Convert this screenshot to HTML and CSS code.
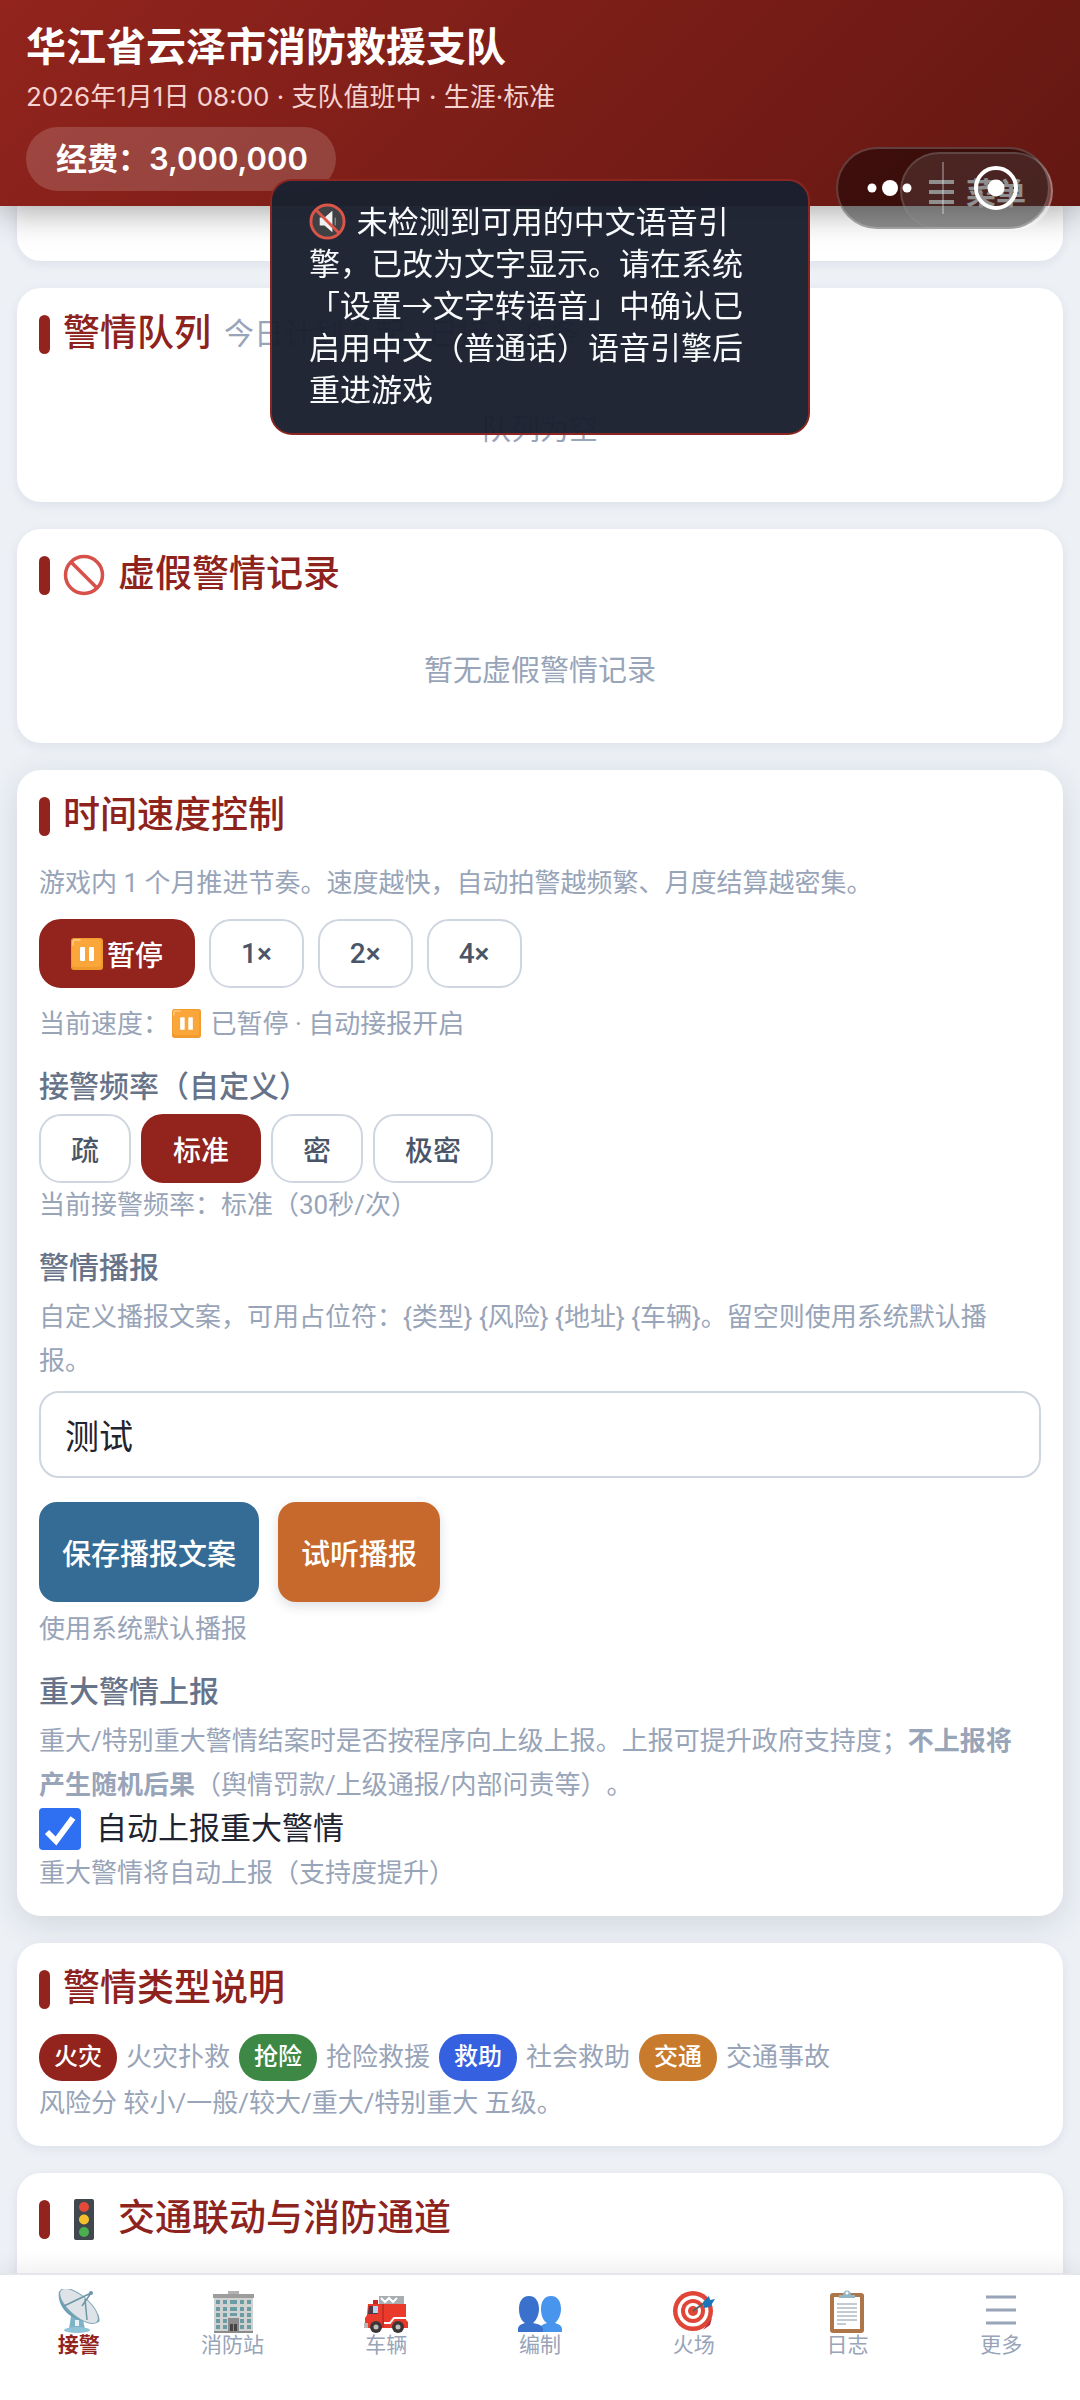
FILE: index.html
```html
<!DOCTYPE html>
<html lang="zh-CN">
<head>
  <meta charset="UTF-8">
  <meta name="viewport" content="width=device-width, initial-scale=1.0">
  <title>消防救援支队</title>
  <link rel="stylesheet" href="styles.css">
</head>
<body>
  <!-- shared icons -->
  <svg class="sprite" aria-hidden="true">
    <symbol id="icon-pause" viewBox="0 0 32 32">
      <rect x="0" y="0" width="32" height="32" rx="3" fill="#f19a2e"/>
      <rect x="1" y="1" width="29" height="28" rx="3" fill="#fba63a"/>
      <path d="M2 7V4q0-2 2-2h5" fill="none" stroke="#ffd08c" stroke-width="1.5" stroke-linecap="round"/>
      <rect x="9" y="9" width="5" height="14" rx="1" fill="#fff"/>
      <rect x="18" y="9" width="5" height="14" rx="1" fill="#fff"/>
    </symbol>
  </svg>

  <header class="header">
    <h1>华江省云泽市消防救援支队</h1>
    <p class="subtitle">2026年1月1日 08:00 · 支队值班中 · 生涯·标准</p>
    <div class="funds">经费：3,000,000</div>
    <button class="menu-btn" type="button">
      <svg viewBox="0 0 26 26" width="26" height="26"><path d="M0 4h25M0 14h25M0 24h25" stroke="currentColor" stroke-width="4"/></svg>
      菜单
    </button>
    <div class="capsule">
      <button class="capsule-btn" type="button" aria-label="更多操作">
        <svg viewBox="0 0 46 18" width="46" height="18" fill="#fff"><circle cx="5" cy="9" r="4.5"/><circle cx="23" cy="9" r="8"/><circle cx="40" cy="9" r="4.5"/></svg>
      </button>
      <button class="capsule-btn capsule-close" type="button" aria-label="关闭">
        <svg viewBox="0 0 44 44" width="44" height="44"><circle cx="22" cy="22" r="20" fill="none" stroke="#fff" stroke-width="4"/><circle cx="22" cy="22" r="8.5" fill="#fff"/></svg>
      </button>
    </div>
  </header>

  <main class="main">
    <section class="card card-tail"></section>

    <section class="card">
      <h2>警情队列 <small>今日计划 2 起 · 已接入 0 条</small></h2>
      <p class="empty">队列为空</p>
    </section>

    <section class="card">
      <h2>
        <svg class="title-icon" viewBox="0 0 42 42"><g fill="none" stroke="#d8504a" stroke-width="3.5"><circle cx="21" cy="21" r="18.5"/><path d="M8 8l26 26"/></g></svg>
        虚假警情记录
      </h2>
      <p class="empty">暂无虚假警情记录</p>
    </section>

    <section class="card card-active">
      <h2>时间速度控制</h2>
      <p class="hint">游戏内 1 个月推进节奏。速度越快，自动拍警越频繁、月度结算越密集。</p>
      <div class="chips chips-speed">
        <button class="chip active" type="button"><svg class="chip-icon"><use href="#icon-pause"/></svg>暂停</button>
        <button class="chip" type="button">1×</button>
        <button class="chip" type="button">2×</button>
        <button class="chip" type="button">4×</button>
      </div>
      <p class="hint">当前速度：<svg class="inline-icon"><use href="#icon-pause"/></svg> 已暂停 · 自动接报开启</p>

      <h3>接警频率（自定义）</h3>
      <div class="chips">
        <button class="chip" type="button">疏</button>
        <button class="chip active" type="button">标准</button>
        <button class="chip" type="button">密</button>
        <button class="chip" type="button">极密</button>
      </div>
      <p class="hint">当前接警频率：标准（30秒/次）</p>

      <h3><label for="broadcast">警情播报</label></h3>
      <p class="hint">自定义播报文案，可用占位符：{类型} {风险} {地址} {车辆}。留空则使用系统默认播报。</p>
      <input class="text-input" id="broadcast" type="text" value="测试">
      <div class="actions">
        <button class="btn btn-blue" type="button">保存播报文案</button>
        <button class="btn btn-orange" type="button">试听播报</button>
      </div>
      <p class="hint">使用系统默认播报</p>

      <h3>重大警情上报</h3>
      <p class="hint">重大/特别重大警情结案时是否按程序向上级上报。上报可提升政府支持度；<strong>不上报将产生随机后果</strong>（舆情罚款/上级通报/内部问责等）。</p>
      <label class="check"><input type="checkbox" checked> 自动上报重大警情</label>
      <p class="hint">重大警情将自动上报（支持度提升）</p>
    </section>

    <section class="card">
      <h2>警情类型说明</h2>
      <div class="types">
        <span class="tag tag-fire">火灾</span><span>火灾扑救</span>
        <span class="tag tag-rescue">抢险</span><span>抢险救援</span>
        <span class="tag tag-help">救助</span><span>社会救助</span>
        <span class="tag tag-traffic">交通</span><span>交通事故</span>
      </div>
      <p class="hint">风险分 较小/一般/较大/重大/特别重大 五级。</p>
    </section>

    <section class="card">
      <h2>
        <svg class="title-icon" viewBox="0 0 42 42"><rect x="11" y="1" width="20" height="41" rx="2" fill="#40484d"/><circle cx="21" cy="9" r="5" fill="#e5493a"/><circle cx="21" cy="21.5" r="5" fill="#f6c02d"/><circle cx="21" cy="34" r="5" fill="#4bae4f"/></svg>
        交通联动与消防通道
      </h2>
      <p class="empty"></p>
    </section>
  </main>

  <nav class="tabbar">
    <a class="tab active" href="#alarm">
      <svg viewBox="0 0 44 44">
        <path d="M14 27h11l3 13H12z" fill="#7fb3c8"/><path d="M18 31h4v6h-4z" fill="#e6f2f6"/>
        <ellipse cx="20" cy="41" rx="13" ry="3" fill="#8fc3d5"/>
        <path d="M2 2C0 12 6 32 38 34c6 0 5-4 3-9z" fill="#6b9fb6"/>
        <ellipse cx="22" cy="17" rx="24" ry="10" transform="rotate(41 22 17)" fill="#dde3e6" stroke="#86a9b8"/>
        <path d="M7 17L34 4M25 17l9-13M30 31L28 10" fill="none" stroke="#6e96a8" stroke-width="1.5"/><circle cx="34" cy="4" r="2" fill="#6e96a8"/>
      </svg>
      <span>接警</span>
    </a>
    <a class="tab" href="#station">
      <svg viewBox="0 0 44 44">
        <path d="M17 2h11v4H17z" fill="#b3b3b3"/><path d="M2 5h41v4H2z" fill="#9d9d9d"/><path d="M3 9h39v34H3z" fill="#d0d2d2"/>
        <g fill="#6b9ba3"><path d="M5 11h4v4H5zM12 11h4v4h-4zM19 11h7v4h-7zM29 11h4v4h-4zM36 11h4v4h-4z"/><path d="M5 18h4v4H5zM12 18h4v4h-4zM19 18h7v4h-7zM29 18h4v4h-4zM36 18h4v4h-4z"/><path d="M5 24h4v4H5zM12 24h4v4h-4zM19 24h7v3h-7zM29 24h4v4h-4zM36 24h4v4h-4z"/><path d="M5 30h4v4H5zM12 30h4v4h-4zM29 30h4v4h-4zM36 30h4v4h-4zM5 36h4v4H5zM12 36h4v4h-4zM29 36h4v4h-4zM36 36h4v4h-4z"/></g>
        <path d="M17 29h11v14H17z" fill="#8b8b8b"/><path d="M19 35h3v8h-3zM23 35h3v8h-3z" fill="#454545"/><path d="M3 42h39v2H3z" fill="#8b8b8b"/>
      </svg>
      <span>消防站</span>
    </a>
    <a class="tab" href="#vehicles">
      <svg viewBox="0 0 44 44">
        <path d="M15 7h25v8H15z" fill="#a9adb0"/><path d="M17 9l4 4 4-4 4 4 4-4" fill="none" stroke="#fff" stroke-width="2"/>
        <path d="M9 11h5v5H9z" fill="#c62828"/><path d="M4 15h38v16l2 2v6H1V29l2-3z" fill="#ea3a2c"/>
        <path d="M5 17h9v8H4z" fill="#4a3b4d"/><path d="M9 17h5v7H9z" fill="#b7d4f5"/><path d="M19 15v23" stroke="#a9211b"/>
        <path d="M20 34h6l4-5h14" fill="none" stroke="#fff" stroke-width="2"/><path d="M0 34h4v5H0z" fill="#b8b8b8"/>
        <g fill="#3e3636"><circle cx="12" cy="38" r="6"/><circle cx="34" cy="38" r="6"/></g><g fill="#bdbdbd"><circle cx="12" cy="38" r="2.5"/><circle cx="34" cy="38" r="2.5"/></g>
      </svg>
      <span>车辆</span>
    </a>
    <a class="tab" href="#staff">
      <svg viewBox="0 0 44 44">
        <path d="M33 7c7 0 10 6 10 13 0 6-3 12-6 14 4 1 7 3 7 6v3H22v-3c0-3 3-5 7-6-4-2-6-8-6-14 0-7 3-13 10-13z" fill="#4795ec"/>
        <path d="M11 7c7 0 10 6 10 13 0 6-3 12-6 14 6 1 10 3 10 6v3H0v-3c0-3 3-5 7-6-4-2-6-8-6-14C1 13 4 7 11 7z" fill="#3971cc"/>
      </svg>
      <span>编制</span>
    </a>
    <a class="tab" href="#scene">
      <svg viewBox="0 0 44 44">
        <circle cx="21" cy="22" r="20" fill="#df4638"/><circle cx="21" cy="22" r="15.5" fill="#fff"/><circle cx="21" cy="22" r="12" fill="#df4638"/><circle cx="21" cy="22" r="8" fill="#fff"/><circle cx="21" cy="22" r="5" fill="#df4638"/>
        <path d="M21 22l14-10" stroke="#55616b" stroke-width="2"/><path d="M31 13l6-6 1 4 5-1-5 8-6 1z" fill="#1976b9"/><path d="M31 41l9-12-2 7z" fill="#b52e3c"/>
      </svg>
      <span>火场</span>
    </a>
    <a class="tab" href="#logs">
      <svg viewBox="0 0 44 44">
        <rect x="5" y="4" width="34" height="40" rx="3" fill="#ad7548"/><path d="M9 8h26v32H9z" fill="#fff"/>
        <path d="M14 9V6h4c0-6 8-6 8 0h4v3z" fill="#92b5c3"/><circle cx="22" cy="4" r="1.5" fill="#fff"/>
        <path d="M12 15h20M12 19h20M12 23h20M12 27h20M12 31h20M12 35h9" stroke="#aebac2" stroke-width="1.5"/>
      </svg>
      <span>日志</span>
    </a>
    <a class="tab" href="#more">
      <svg viewBox="0 0 44 44"><path d="M7 8h30M7 21h30M7 34h30" stroke="#98a4b8" stroke-width="3"/></svg>
      <span>更多</span>
    </a>
  </nav>

  <div class="toast" role="status">
    <svg class="toast-icon" viewBox="0 0 38 38"><circle cx="19" cy="19" r="17" fill="#3f4144"/><path d="M11 15h5l8-7v22l-8-7h-5z" fill="#f1f1f1"/><path d="M27 15v8" stroke="#888" stroke-width="1.5"/><g fill="none" stroke="#dc5549" stroke-width="3"><circle cx="19" cy="19" r="17"/><path d="M7 7l24 24"/></g></svg>
    未检测到可用的中文语音引擎，已改为文字显示。请在系统「设置→文字转语音」中确认已启用中文（普通话）语音引擎后重进游戏
  </div>
</body>
</html>
```
FILE: styles.css
```css
* {
  box-sizing: border-box;
}
body {
  font-family: Roboto, "Noto Sans CJK SC", sans-serif;
  margin: 0;
  height: 100vh;
  display: flex;
  flex-direction: column;
  overflow: hidden;
  background: #edf1f6;
  color: #1f2430;
  text-spacing-trim: space-all;
}
h1, h2, h3, p {
  margin: 0;
}
button, input {
  font-family: inherit;
}
button {
  cursor: pointer;
}
.sprite {
  position: absolute;
  width: 0;
  height: 0;
}

/* header */
.header {
  position: relative;
  z-index: 2;
  flex: none;
  padding: 24px 26px 15px;
  background: linear-gradient(135deg, #92241d, #641712);
  color: #fff;
  box-shadow: 0 6px 32px rgba(0, 0, 0, 0.35);
}
h1 {
  font-size: 40px;
  line-height: 48px;
}
.subtitle {
  margin: 7px 0 12px;
  font-family: Inter, "Noto Sans CJK SC", sans-serif;
  font-size: 26px;
  line-height: 36px;
  color: #f4d3d1;
}
.funds {
  display: inline-block;
  vertical-align: top;
  padding: 0 28px 0 30px;
  border-radius: 32px;
  background: rgba(255, 255, 255, 0.16);
  font-family: Inter, "Noto Sans CJK SC", sans-serif;
  font-size: 31px;
  font-weight: 600;
  line-height: 64px;
}
.menu-btn {
  position: absolute;
  right: 27px;
  top: 152px;
  display: flex;
  align-items: center;
  gap: 11px;
  height: 78px;
  padding: 0 25px 0 27px;
  border: 2px solid rgba(255, 255, 255, 0.3);
  border-radius: 39px;
  background: rgba(255, 255, 255, 0.18);
  color: #fff;
  font-size: 30px;
  font-weight: 600;
}
.capsule {
  position: absolute;
  right: 30px;
  top: 147px;
  display: flex;
  align-items: center;
  width: 214px;
  height: 82px;
  border: 2px solid rgba(255, 255, 255, 0.2);
  border-radius: 41px;
  background: rgba(0, 0, 0, 0.44);
}
.capsule-btn {
  flex: 1;
  display: flex;
  justify-content: center;
  padding: 4px 0;
  border: 0;
  background: none;
}
.capsule-close {
  border-left: 2px solid rgba(255, 255, 255, 0.3);
}

/* cards */
.main {
  flex: 1;
  min-height: 0;
  overflow: hidden;
  padding: 0 17px;
}
.card {
  margin-bottom: 27px;
  padding: 21px 22px;
  border-radius: 24px;
  background: #fff;
  box-shadow: 0 3px 12px rgba(20, 35, 55, 0.07);
}
.card-tail {
  height: 55px;
  border-radius: 0 0 24px 24px;
}
.card-active {
  box-shadow: 0 8px 32px rgba(20, 35, 55, 0.13);
}
h2 {
  display: flex;
  align-items: center;
  gap: 13px;
  margin-bottom: 20px;
  color: #8e231d;
  font-size: 37px;
  font-weight: 500;
  line-height: 50px;
}
h2::before {
  content: "";
  width: 11px;
  height: 39px;
  border-radius: 6px;
  background: #92231d;
}
h2 small {
  color: #98a4b8;
  font-size: 30px;
  font-weight: 400;
}
.title-icon {
  width: 42px;
  height: 42px;
}
.empty {
  padding: 30px 0;
  min-height: 102px;
  color: #98a4b8;
  font-size: 29px;
  line-height: 42px;
  text-align: center;
}
.hint {
  padding-right: 20px;
  color: #98a4b8;
  font-size: 26px;
  line-height: 44px;
}
h3 {
  margin: 22px 0 8px;
  color: #677389;
  font-size: 30px;
  font-weight: 500;
  line-height: 38px;
}

/* controls */
.chips {
  display: flex;
  gap: 10px;
}
.chips-speed {
  gap: 14px;
  margin: 14px 0;
}
.chip {
  display: flex;
  align-items: center;
  gap: 4px;
  height: 69px;
  padding: 0 30px;
  border: 2px solid #cfd6e0;
  border-radius: 22px;
  background: #fff;
  color: #4a5568;
  font-size: 28px;
  font-weight: 500;
}
.chip.active {
  border-color: #92231d;
  background: #92231d;
  color: #fff;
}
.chip-icon {
  width: 32px;
  height: 32px;
}
.inline-icon {
  width: 29px;
  height: 29px;
  margin: 0 3px;
  vertical-align: -5px;
}
.text-input {
  display: block;
  width: 100%;
  height: 87px;
  margin: 8px 0 24px;
  padding: 0 24px;
  border: 2px solid #cfd6e0;
  border-radius: 20px;
  background: #fff;
  color: #1f2430;
  font-size: 34px;
}
.actions {
  display: flex;
  gap: 19px;
  margin-bottom: 5px;
}
.btn {
  height: 100px;
  padding: 0 23px;
  border: 0;
  border-radius: 18px;
  color: #fff;
  font-size: 29px;
  font-weight: 500;
}
.btn-blue {
  background: #356c95;
}
.btn-orange {
  background: #c7692c;
  box-shadow: 0 4px 12px rgba(20, 35, 55, 0.15);
}
.check {
  display: flex;
  align-items: center;
  gap: 15px;
  font-size: 31px;
  line-height: 44px;
}
.check input {
  appearance: none;
  width: 42px;
  height: 42px;
  margin: 0;
  border: 2px solid #2f70f2;
  border-radius: 4px;
}
.check input:checked {
  background: #2f70f2 url("data:image/svg+xml,%3Csvg xmlns='http://www.w3.org/2000/svg' viewBox='0 0 38 38'%3E%3Cpath d='M6 22l9 9L32 8' fill='none' stroke='white' stroke-width='6'/%3E%3C/svg%3E") center / contain no-repeat;
}

/* incident types */
.types {
  display: flex;
  flex-wrap: wrap;
  align-items: center;
  gap: 0 9px;
  color: #98a4b8;
  font-size: 26px;
  line-height: 47px;
}
.tag {
  padding: 0 15px;
  border-radius: 23px;
  color: #fff;
  font-size: 24px;
  font-weight: 500;
}
.tag-fire {
  background: #92231d;
}
.tag-rescue {
  background: #3d8845;
}
.tag-help {
  background: #3560e0;
}
.tag-traffic {
  background: #c87b2d;
}

/* bottom tabs */
.tabbar {
  position: relative;
  z-index: 1;
  flex: none;
  display: flex;
  height: 127px;
  padding: 14px 2px 0;
  background: #fff;
  border-top: 2px solid #e4e6ea;
  box-shadow: 0 -4px 24px rgba(0, 0, 0, 0.08);
}
.tab {
  flex: 1;
  display: flex;
  flex-direction: column;
  align-items: center;
  color: #98a4b8;
  font-size: 21px;
  line-height: 24px;
  text-decoration: none;
}
.tab svg {
  width: 44px;
  height: 44px;
}
.tab.active {
  color: #92231d;
  font-weight: 600;
}

.toast {
  position: fixed;
  z-index: 3;
  top: 179px;
  left: 50%;
  transform: translateX(-50%);
  width: 50%;
  padding: 21px 42px 21px 37px;
  border: 2px solid #8a2521;
  border-radius: 22px;
  background: rgba(26, 32, 46, 0.97);
  color: #f8fafc;
  font-size: 31px;
  line-height: 42px;
}
.toast-icon {
  width: 37px;
  height: 37px;
  margin-right: 3px;
  vertical-align: -7px;
}
```
